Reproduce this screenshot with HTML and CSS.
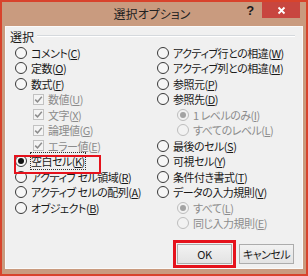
FILE: index.html
```html
<!DOCTYPE html>
<html lang="ja">
<head>
<meta charset="utf-8">
<title>選択オプション</title>
<link rel="stylesheet" href="styles.css">
</head>
<body>
<div class="window">
  <div class="titlebar">
    <div class="title">選択オプション</div>
    <div class="help">?</div>
    <div class="close">
      <svg width="9" height="9" viewBox="0 0 9 9"><path d="M1.5 1.5 L7.5 7.5 M7.5 1.5 L1.5 7.5" stroke="#fff" stroke-width="1.8" fill="none"/></svg>
    </div>
  </div>
  <div class="client">
    <div class="group-head"><span>選択</span><span class="rule"></span></div>
    <div class="cols">
      <div class="col">
        <div class="opt"><span class="rb"></span><span>コメント(<u>C</u>)</span></div>
        <div class="opt"><span class="rb"></span><span>定数(<u>O</u>)</span></div>
        <div class="opt"><span class="rb"></span><span>数式(<u>F</u>)</span></div>
        <div class="opt sub dis"><span class="cb"><svg width="9" height="9" viewBox="0 0 9 9"><path d="M1.2 4.6 L3.5 6.9 L7.8 1.8" stroke="#8c8c8c" stroke-width="1.5" fill="none"/></svg></span><span>数値(<u>U</u>)</span></div>
        <div class="opt sub dis"><span class="cb"><svg width="9" height="9" viewBox="0 0 9 9"><path d="M1.2 4.6 L3.5 6.9 L7.8 1.8" stroke="#8c8c8c" stroke-width="1.5" fill="none"/></svg></span><span>文字(<u>X</u>)</span></div>
        <div class="opt sub dis"><span class="cb"><svg width="9" height="9" viewBox="0 0 9 9"><path d="M1.2 4.6 L3.5 6.9 L7.8 1.8" stroke="#8c8c8c" stroke-width="1.5" fill="none"/></svg></span><span>論理値(<u>G</u>)</span></div>
        <div class="opt sub dis"><span class="cb"><svg width="9" height="9" viewBox="0 0 9 9"><path d="M1.2 4.6 L3.5 6.9 L7.8 1.8" stroke="#8c8c8c" stroke-width="1.5" fill="none"/></svg></span><span>エラー値(<u>E</u>)</span></div>
        <div class="opt hl"><span class="rb on"></span><span class="focus">空白セル(<u>K</u>)</span></div>
        <div class="opt"><span class="rb"></span><span>アクティブ セル領域(<u>R</u>)</span></div>
        <div class="opt"><span class="rb"></span><span>アクティブ セルの配列(<u>A</u>)</span></div>
        <div class="opt"><span class="rb"></span><span>オブジェクト(<u>B</u>)</span></div>
      </div>
      <div class="col">
        <div class="opt"><span class="rb"></span><span>アクティブ行との相違(<u>W</u>)</span></div>
        <div class="opt"><span class="rb"></span><span>アクティブ列との相違(<u>M</u>)</span></div>
        <div class="opt"><span class="rb"></span><span>参照元(<u>P</u>)</span></div>
        <div class="opt"><span class="rb"></span><span>参照先(<u>D</u>)</span></div>
        <div class="opt sub2 dis"><span class="rb on"></span><span>1 レベルのみ(<u>I</u>)</span></div>
        <div class="opt sub2 dis"><span class="rb"></span><span>すべてのレベル(<u>L</u>)</span></div>
        <div class="opt"><span class="rb"></span><span>最後のセル(<u>S</u>)</span></div>
        <div class="opt"><span class="rb"></span><span>可視セル(<u>Y</u>)</span></div>
        <div class="opt"><span class="rb"></span><span>条件付き書式(<u>T</u>)</span></div>
        <div class="opt"><span class="rb"></span><span>データの入力規則(<u>V</u>)</span></div>
        <div class="opt sub2 dis"><span class="rb on"></span><span>すべて(<u>L</u>)</span></div>
        <div class="opt sub2 dis"><span class="rb"></span><span>同じ入力規則(<u>E</u>)</span></div>
      </div>
    </div>
    <div class="buttons">
      <div class="btn marked">OK</div>
      <div class="btn">キャンセル</div>
    </div>
  </div>
</div>
</body>
</html>
```

FILE: styles.css
```css
* { box-sizing: border-box; }
html, body { margin: 0; padding: 0; }
body {
  width: 308px;
  height: 276px;
  overflow: hidden;
  background: #fff;
  font-family: "Noto Sans CJK JP", "Noto Sans", sans-serif;
  font-size: 11px;
  letter-spacing: -0.5px;
  color: #1a1a1a;
  font-feature-settings: "palt";
}
.window {
  width: 308px;
  height: 276px;
  border: 2px solid #d8432c;
  background: #c99b7f;
  display: flex;
  flex-direction: column;
}
.titlebar {
  height: 24px;
  flex: none;
  display: flex;
  align-items: flex-start;
  padding-right: 6px;
}
.title {
  flex: 1;
  text-align: center;
  padding-left: 62px;
  line-height: 24px;
  font-size: 12px;
  letter-spacing: 0;
  color: #222;
}
.help {
  width: 20px;
  margin-right: 2px;
  text-align: center;
  font-family: "Liberation Sans", sans-serif;
  font-weight: bold;
  font-size: 13px;
  line-height: 18px;
  color: #1a1a1a;
}
.close {
  width: 38px;
  height: 16px;
  background: #c8463f;
  display: flex;
  align-items: center;
  justify-content: center;
}
.close svg { display: block; }
.client {
  margin: 0 3px;
  height: 243px;
  flex: none;
  background: #f0f0f0;
  border: 1px solid #fafafa;
  display: flex;
  flex-direction: column;
}
.group-head {
  height: 18px;
  display: flex;
  align-items: center;
  gap: 3px;
  padding: 0 7px 0 4px;
  font-size: 12px;
  letter-spacing: 0;
}
.rule {
  flex: 1;
  height: 2px;
  border-top: 1px solid #d5d9dd;
  border-bottom: 1px solid #fff;
}
.cols {
  display: grid;
  grid-template-columns: 142px 1fr;
  padding-left: 9px;
}
.opt {
  display: flex;
  align-items: center;
  gap: 4px;
  height: 15.5px;
  white-space: nowrap;
}
.opt.sub { padding-left: 18px; }
.opt.sub2 { padding-left: 20px; }
.opt.dis { color: #8c8c8c; }
.rb {
  flex: none;
  width: 12px;
  height: 12px;
  border-radius: 50%;
  border: 1px solid #383838;
  background: #f6f6f6;
  display: flex;
  align-items: center;
  justify-content: center;
}
.rb.on::after {
  content: "";
  width: 6px;
  height: 6px;
  border-radius: 50%;
  background: #111;
}
.dis .rb { border-color: #bdbdbd; background: #f2f2f2; }
.dis .rb.on::after { background: #a3a3a3; }
.cb {
  flex: none;
  width: 11px;
  height: 11px;
  border: 1px solid #c2c2c2;
  background: #f4f4f4;
  display: flex;
  align-items: center;
  justify-content: center;
}
.cb svg { display: block; }
.hl { position: relative; }
.hl::after {
  content: "";
  position: absolute;
  left: -1px;
  top: 1.5px;
  width: 83px;
  height: 15px;
  border: 2px solid #e5121c;
}
.focus { outline: 1px dotted #333; outline-offset: 0; }
.buttons {
  margin-top: auto;
  display: flex;
  justify-content: flex-end;
  gap: 7px;
  padding: 0 8px 4px 0;
}
.btn {
  width: 55px;
  height: 20px;
  border: 1px solid #acacac;
  background: linear-gradient(#f2f2f2, #e3e3e3);
  display: flex;
  align-items: center;
  justify-content: center;
  font-size: 11px;
  color: #1a1a1a;
}
.btn.marked { outline: 3px solid #e5121c; outline-offset: 1px; }
```
